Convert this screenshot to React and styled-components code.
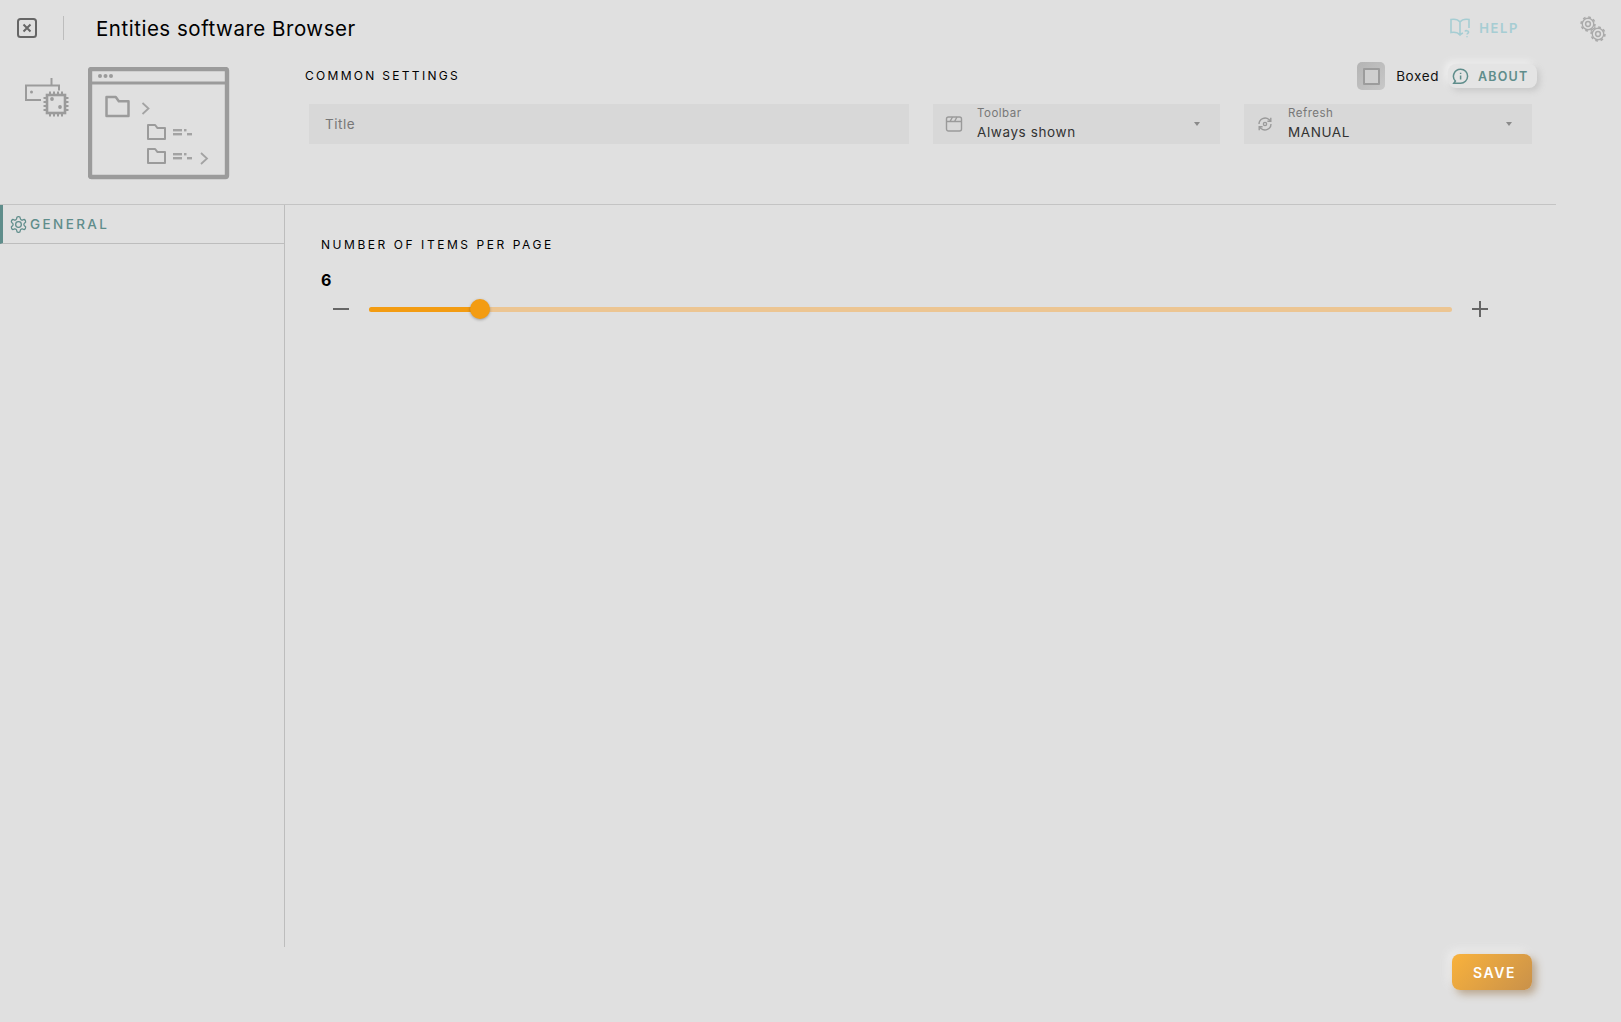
import React from "react";
import styled, { createGlobalStyle } from "styled-components";

const FONT = `"Inter", "Noto Sans", "Liberation Sans", sans-serif`;

const GearPath = () => (
  <>
    <path d="M12.22 2h-.44a2 2 0 0 0-2 2v.18a2 2 0 0 1-1 1.73l-.43.25a2 2 0 0 1-2 0l-.15-.08a2 2 0 0 0-2.73.73l-.22.38a2 2 0 0 0 .73 2.73l.15.1a2 2 0 0 1 1 1.72v.51a2 2 0 0 1-1 1.74l-.15.09a2 2 0 0 0-.73 2.73l.22.38a2 2 0 0 0 2.73.73l.15-.08a2 2 0 0 1 2 0l.43.25a2 2 0 0 1 1 1.73V20a2 2 0 0 0 2 2h.44a2 2 0 0 0 2-2v-.18a2 2 0 0 1 1-1.73l.43-.25a2 2 0 0 1 2 0l.15.08a2 2 0 0 0 2.73-.73l.22-.39a2 2 0 0 0-.73-2.73l-.15-.08a2 2 0 0 1-1-1.74v-.5a2 2 0 0 1 1-1.74l.15-.09a2 2 0 0 0 .73-2.73l-.22-.38a2 2 0 0 0-2.73-.73l-.15.08a2 2 0 0 1-2 0l-.43-.25a2 2 0 0 1-1-1.73V4a2 2 0 0 0-2-2z" />
    <circle cx="12" cy="12" r="3.6" />
  </>
);

const Cog = () => (
  <>
    <circle cx="12" cy="12" r="8.6" strokeWidth="2" />
    <circle cx="12" cy="12" r="10.4" strokeWidth="2.4" strokeDasharray="4.08 4.08" />
    <circle cx="12" cy="12" r="3.6" strokeWidth="2.2" />
  </>
);

const Folder = ({ x, y, w, h, sw }) => (
  <path
    d={`M${x} ${y + h}V${y}h${w * 0.42}l${w * 0.14} ${h * 0.22}h${w * 0.44}V${y + h}z`}
    fill="none"
    stroke="#9b9b9b"
    strokeWidth={sw}
    strokeLinejoin="round"
  />
);

const Dashes = ({ x, y }) => (
  <g fill="#a3a3a3">
    <rect x={x} y={y} width="9" height="2.4" />
    <rect x={x + 11} y={y} width="2.5" height="2.4" />
    <rect x={x} y={y + 4} width="9" height="2.4" />
    <rect x={x + 14} y={y + 4} width="5" height="2.4" />
  </g>
);

const WidgetLogo = () => (
  <svg width="142" height="113" viewBox="88 67 142 113">
    <rect x="90" y="69" width="137" height="108" rx="1.5" fill="none" stroke="#9b9b9b" strokeWidth="4.4" />
    <rect x="90" y="81.5" width="137" height="3" fill="#9b9b9b" />
    <circle cx="100" cy="76" r="2" fill="#9b9b9b" />
    <circle cx="105.5" cy="76" r="2" fill="#9b9b9b" />
    <circle cx="111" cy="76" r="2" fill="#9b9b9b" />
    <Folder x={106.5} y={97} w={22} h={19} sw={2.5} />
    <path d="M142.5 103l6 5.5-6 5.5" fill="none" stroke="#a3a3a3" strokeWidth="1.8" />
    <Folder x={148} y={125} w={17} h={14} sw={2} />
    <Dashes x={173} y={129} />
    <Folder x={148} y={149} w={17} h={14} sw={2} />
    <Dashes x={173} y={153} />
    <path d="M201 153l6 5.5-6 5.5" fill="none" stroke="#a3a3a3" strokeWidth="1.8" />
  </svg>
);

const ChipLogo = () => (
  <ChipSvg width="46" height="40" viewBox="24 78 46 40">
    <g fill="none" stroke="#9b9b9b">
      <path strokeWidth="2" d="M51.5 78v7M41 100H26V85.5h33v5" />
      <rect strokeWidth="2.6" x="47" y="95" width="18" height="18" />
      <path strokeWidth="2" d="M50 91.5v3M54 91.5v3M58 91.5v3M62 91.5v3M50 113.5v3M54 113.5v3M58 113.5v3M62 113.5v3M43.5 98h3M43.5 102h3M43.5 106h3M43.5 110h3M65.5 98h3M65.5 102h3M65.5 106h3M65.5 110h3" />
    </g>
    <circle cx="31.5" cy="92" r="1.5" fill="#9b9b9b" />
    <circle cx="52" cy="99" r="1.9" fill="#9b9b9b" />
    <circle cx="60" cy="107" r="1.9" fill="#9b9b9b" />
  </ChipSvg>
);

const App = () => {
  return (
    <>
      <GlobalStyle />
      <Page>
        <Header>
          <CloseButton>
            <svg width="20" height="20" viewBox="0 0 20 20" fill="none" stroke="#666" strokeWidth="2">
              <rect x="1" y="1" width="18" height="18" rx="2.5" />
              <path d="M6.5 6.5l7 7M13.5 6.5l-7 7" />
            </svg>
          </CloseButton>
          <HeaderDivider />
          <Title>Entities software Browser</Title>
          <HelpLink>
            <svg width="21" height="20" viewBox="0 0 21 20" fill="none" stroke="#a6cdd3" strokeWidth="1.6">
              <path d="M10 4C8 1.5 4 1 1 1.5v13c3-.5 7 0 9 2.5 1-1.2 2-1.8 3-2.1M10 4c2-2.5 6-3 9-2.5V10M10 4v13" />
              <path d="M15 13.5c.5-1.2 3.6-1.2 3.6.6 0 1.2-1.6 1.2-1.6 2.4M17 18.2v1" />
            </svg>
            HELP
          </HelpLink>
          <GearPair>
            <GearBig viewBox="0 0 24 24"><Cog /></GearBig>
            <GearSmall viewBox="0 0 24 24"><Cog /></GearSmall>
          </GearPair>
        </Header>

        <TopSection>
          <Logos>
            <ChipLogo />
            <WidgetLogo />
          </Logos>
          <Common>
            <CommonHead>
              <SectionTitle>COMMON SETTINGS</SectionTitle>
              <BoxedToggle>
                <BoxedBox><BoxedInner /></BoxedBox>
                <BoxedLabel>Boxed</BoxedLabel>
              </BoxedToggle>
              <AboutButton>
                <svg width="17" height="17" viewBox="0 0 17 17" fill="none" stroke="#5f8d8b" strokeWidth="1.5">
                  <path d="M8.7 1.2a7 7 0 1 1-.2 14H1.8l1.6-2.2A7 7 0 0 1 8.7 1.2z" />
                  <path d="M8.6 7.6v4M8.6 4.8v1.2" />
                </svg>
                ABOUT
              </AboutButton>
            </CommonHead>
            <Fields>
              <TitleField>Title</TitleField>
              <SelectField>
                <svg width="18" height="18" viewBox="0 0 18 18" fill="none" stroke="#9a9a9a" strokeWidth="1.4">
                  <rect x="1.5" y="2" width="15" height="14" rx="2" />
                  <path d="M1.5 6.5h15M5 6.5L7.5 2M9.5 6.5L12 2" />
                </svg>
                <SelectText>
                  <SelectLabel>Toolbar</SelectLabel>
                  <SelectValue>Always shown</SelectValue>
                </SelectText>
                <Caret />
              </SelectField>
              <SelectField>
                <svg width="18" height="18" viewBox="0 0 18 18" fill="none" stroke="#9a9a9a" strokeWidth="1.4">
                  <path d="M3 9a6 6 0 0 1 10-4.4L14.5 6M15 9a6 6 0 0 1-10 4.4L3.5 12" />
                  <path d="M14.8 2.8V6.2h-3.4M3.2 15.2v-3.4h3.4" />
                  <circle cx="9" cy="9" r="1.6" />
                </svg>
                <SelectText>
                  <SelectLabel>Refresh</SelectLabel>
                  <SelectValue>MANUAL</SelectValue>
                </SelectText>
                <Caret />
              </SelectField>
            </Fields>
          </Common>
        </TopSection>

        <Body>
          <Sidebar>
            <Tab>
              <TabIcon viewBox="0 0 24 24"><GearPath /></TabIcon>
              GENERAL
            </Tab>
          </Sidebar>
          <Content>
            <SliderTitle>NUMBER OF ITEMS PER PAGE</SliderTitle>
            <SliderValue>6</SliderValue>
            <SliderRow>
              <Minus />
              <Track>
                <Fill style={{ width: `${(6 - 1) / 49 * 100}%` }}>
                  <Thumb />
                </Fill>
              </Track>
              <Plus />
            </SliderRow>
          </Content>
        </Body>

        <Footer>
          <SaveButton>SAVE</SaveButton>
        </Footer>
      </Page>
    </>
  );
};

export default App;

// ---------- Styled Components ----------
const GlobalStyle = createGlobalStyle`
  html, body {
    margin: 0;
    padding: 0;
    background: #e0e0e0;
  }
  body {
    font-family: ${FONT};
    overflow: hidden;
  }
`;

const Page = styled.div`
  width: 1621px;
  height: 1022px;
  background: #e0e0e0;
  color: #000;
`;

const Header = styled.header`
  display: flex;
  align-items: center;
  height: 56px;
  padding: 0 16px 0 17px;
  box-sizing: border-box;
`;

const CloseButton = styled.div`
  display: flex;
  width: 20px;
  height: 20px;
`;

const HeaderDivider = styled.div`
  width: 1px;
  height: 24px;
  margin: 0 32px 0 26px;
  background: #bdbdbd;
`;

const Title = styled.h1`
  margin: 0;
  flex: 1;
  font-size: 20.5px;
  font-weight: 400;
  letter-spacing: 0.52px;
`;

const HelpLink = styled.div`
  display: flex;
  align-items: center;
  gap: 8px;
  margin-right: 60px;
  color: #a6cdd3;
  font-size: 13px;
  font-weight: 600;
  letter-spacing: 1.6px;
`;

const GearPair = styled.div`
  position: relative;
  width: 26px;
  height: 28px;
  margin-top: 3px;
`;

const GearBig = styled.svg`
  position: absolute;
  left: 1px;
  top: 0;
  width: 16px;
  height: 16px;
  fill: none;
  stroke: #aaaaaa;
`;

const GearSmall = styled(GearBig)`
  left: 11px;
  top: 10px;
`;

const TopSection = styled.section`
  display: flex;
  width: 1556px;
  height: 149px;
  box-sizing: border-box;
  border-bottom: 1px solid #c4c4c4;
`;

const Logos = styled.div`
  display: flex;
  align-items: flex-start;
  gap: 18px;
  width: 305px;
  padding: 11px 0 0 24px;
  box-sizing: border-box;
`;

const ChipSvg = styled.svg`
  margin-top: 11px;
`;

const Common = styled.div`
  width: 1232px;
`;

const CommonHead = styled.div`
  display: flex;
  align-items: center;
  height: 36px;
  padding-top: 4px;
  box-sizing: border-box;
`;

const SectionTitle = styled.h2`
  flex: 1;
  margin: 0 0 2px;
  font-size: 12px;
  font-weight: 400;
  letter-spacing: 2.3px;
`;

const BoxedToggle = styled.label`
  display: flex;
  align-items: center;
  gap: 11px;
`;

const BoxedBox = styled.span`
  display: flex;
  align-items: center;
  justify-content: center;
  width: 28px;
  height: 28px;
  border-radius: 5px;
  background: linear-gradient(135deg, #b4b4b4, #c8c8c8);
`;

const BoxedInner = styled.span`
  width: 13px;
  height: 13px;
  border: 2px solid #9c9c9c;
  border-radius: 1px;
  background: #cfcfcf;
`;

const BoxedLabel = styled.span`
  font-size: 13.5px;
  letter-spacing: 0.6px;
  color: #111;
`;

const AboutButton = styled.button`
  display: flex;
  align-items: center;
  gap: 9px;
  width: 89px;
  height: 24px;
  margin-left: 9px;
  padding: 0 0 0 4px;
  border: none;
  border-radius: 8px;
  background: #e4e4e4;
  box-shadow: 3px 3px 6px #c8c8c8, -3px -3px 6px #f0f0f0;
  color: #5f8d8b;
  font-family: ${FONT};
  font-size: 12.5px;
  font-weight: 600;
  letter-spacing: 1.2px;
`;

const Fields = styled.div`
  display: grid;
  grid-template-columns: 600px 287px 288px;
  gap: 24px;
  margin: 12px 0 0 4px;
`;

const TitleField = styled.div`
  display: flex;
  align-items: center;
  height: 40px;
  padding-left: 16px;
  background: #d8d8d8;
  color: #777;
  font-size: 13.5px;
  letter-spacing: 0.5px;
`;

const SelectField = styled.div`
  display: flex;
  align-items: center;
  gap: 14px;
  height: 40px;
  padding: 0 20px 0 12px;
  box-sizing: border-box;
  background: #d8d8d8;
`;

const SelectText = styled.div`
  display: flex;
  flex: 1;
  flex-direction: column;
  padding-bottom: 3px;
`;

const SelectLabel = styled.span`
  color: #777;
  font-size: 11.5px;
  line-height: 14px;
  letter-spacing: 0.5px;
`;

const SelectValue = styled.span`
  margin-top: 4px;
  color: #333;
  font-size: 13.5px;
  line-height: 16px;
  letter-spacing: 0.6px;
`;

const Caret = styled.span`
  width: 0;
  height: 0;
  border-left: 3.5px solid transparent;
  border-right: 3.5px solid transparent;
  border-top: 4px solid #8a8a8a;
`;

const Body = styled.main`
  display: flex;
  height: 742px;
`;

const Sidebar = styled.nav`
  width: 285px;
  box-sizing: border-box;
  border-right: 1px solid #bdbdbd;
`;

const Tab = styled.div`
  display: flex;
  align-items: center;
  gap: 2px;
  height: 39px;
  box-sizing: border-box;
  padding-left: 6px;
  border-left: 3px solid #5f8d8b;
  border-bottom: 1px solid #bdbdbd;
  color: #5f8d8b;
  font-size: 13.5px;
  font-weight: 500;
  letter-spacing: 2.4px;
`;

const TabIcon = styled.svg`
  width: 19px;
  height: 19px;
  fill: none;
  stroke: #5f8d8b;
  stroke-width: 1.6;
`;

const Content = styled.div`
  flex: 1;
  padding: 33px 0 0 36px;
`;

const SliderTitle = styled.h3`
  margin: 0;
  font-size: 12px;
  line-height: 14px;
  font-weight: 400;
  letter-spacing: 2.55px;
`;

const SliderValue = styled.div`
  margin-top: 19px;
  font-size: 16px;
  line-height: 18px;
  font-weight: 700;
`;

const SliderRow = styled.div`
  display: flex;
  align-items: center;
  height: 20px;
  margin-top: 10px;
  width: 1167px;
`;

const Minus = styled.span`
  width: 16px;
  height: 2px;
  margin-left: 12px;
  margin-right: 20px;
  background: #666;
`;

const Track = styled.div`
  flex: 1;
  height: 5px;
  border-radius: 3px;
  background: #ecc592;
`;

const Fill = styled.div`
  position: relative;
  height: 100%;
  border-radius: 3px;
  background: #f39c12;
`;

const Thumb = styled.span`
  position: absolute;
  right: -10px;
  top: -8px;
  width: 20px;
  height: 20px;
  border-radius: 50%;
  background: #f39c12;
  box-shadow: 0 1px 3px rgba(0, 0, 0, 0.3);
`;

const Plus = styled.span`
  position: relative;
  flex: none;
  width: 16px;
  height: 16px;
  margin-left: 20px;
  background:
    linear-gradient(#666, #666) center / 16px 2px no-repeat,
    linear-gradient(#666, #666) center / 2px 16px no-repeat;
`;

const Footer = styled.footer`
  display: flex;
  justify-content: flex-end;
  padding: 7px 89px 0 0;
`;

const SaveButton = styled.button`
  width: 80px;
  height: 36px;
  padding-left: 11px;
  border: none;
  border-radius: 8px;
  background: linear-gradient(135deg, #f9b23c, #c9914a);
  box-shadow: 4px 4px 8px #b9a48a, -4px -4px 8px #eeeeee;
  color: #fff;
  font-family: ${FONT};
  font-size: 14px;
  font-weight: 600;
  letter-spacing: 1.6px;
`;
